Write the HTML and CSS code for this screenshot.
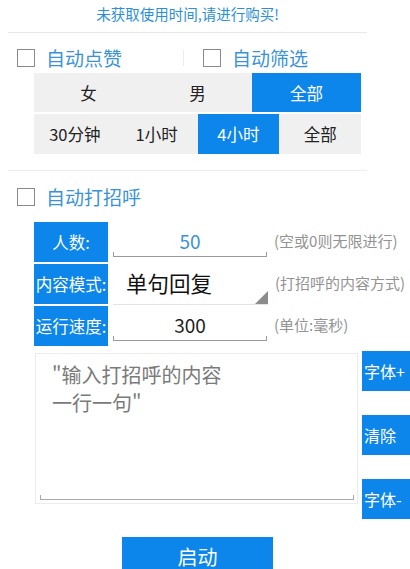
FILE: index.html
```html
<!DOCTYPE html>
<html lang="zh">
<head>
<meta charset="utf-8">
<link rel="stylesheet" href="styles.css">
</head>
<body>
<div class="page">
  <div class="notice">未获取使用时间,请进行购买!</div>
  <div class="checks">
    <label class="check"><span class="box"></span><span class="check-text">自动点赞</span></label>
    <span class="vsep"></span>
    <label class="check"><span class="box"></span><span class="check-text">自动筛选</span></label>
  </div>
  <div class="seg seg3">
    <div class="opt">女</div>
    <div class="opt">男</div>
    <div class="opt on">全部</div>
  </div>
  <div class="seg seg4">
    <div class="opt">30分钟</div>
    <div class="opt">1小时</div>
    <div class="opt on">4小时</div>
    <div class="opt">全部</div>
  </div>
  <div class="divider"></div>
  <div class="checks single">
    <label class="check"><span class="box"></span><span class="check-text">自动打招呼</span></label>
  </div>
  <div class="form">
    <div class="frow">
      <div class="flabel">人数:</div>
      <div class="field"><span class="val blue">50</span><span class="uline"></span></div>
      <div class="hint">(空或0则无限进行)</div>
    </div>
    <div class="frow">
      <div class="flabel">内容模式:</div>
      <div class="spinner"><span class="spin-val">单句回复</span><span class="tri"></span></div>
      <div class="hint">(打招呼的内容方式)</div>
    </div>
    <div class="frow">
      <div class="flabel">运行速度:</div>
      <div class="field"><span class="val">300</span><span class="uline"></span></div>
      <div class="hint">(单位:毫秒)</div>
    </div>
  </div>
  <div class="editor">
    <div class="textarea">
      <div class="placeholder">
        <div class="pline">"输入打招呼的内容</div>
        <div class="pline">一行一句"</div>
      </div>
      <span class="tline"></span>
    </div>
    <div class="side">
      <div class="sbtn">字体+</div>
      <div class="sbtn">清除</div>
      <div class="sbtn">字体-</div>
    </div>
  </div>
  <div class="start-wrap"><div class="start">启动</div></div>
</div>
</body>
</html>
```
FILE: styles.css
```css
html, body {
  margin: 0;
  padding: 0;
  background: #ffffff;
}
body {
  font-family: "Noto Sans CJK SC", "Noto Sans", "Liberation Sans", sans-serif;
  width: 410px;
  height: 569px;
  overflow: hidden;
}
.page {
  display: flex;
  flex-direction: column;
}
.notice {
  margin-left: 8px;
  width: 359px;
  height: 32px;
  border-bottom: 1px solid #e8e8e8;
  text-align: center;
  font-size: 14.5px;
  line-height: 28px;
  color: #2b8fd6;
  white-space: nowrap;
}
.checks {
  display: flex;
  align-items: center;
  height: 40px;
  padding-left: 17px;
  padding-top: 9px;
  box-sizing: border-box;
}
.check {
  display: flex;
  align-items: center;
  gap: 11px;
}
.box {
  width: 16px;
  height: 16px;
  border: 1.5px solid #8a8a8a;
  background: #fff;
}
.check-text {
  font-size: 19px;
  color: #3a93d6;
  line-height: 24px;
}
.vsep {
  width: 1px;
  height: 16px;
  background: #ececec;
  margin: 0 19px 0 61px;
}
.seg {
  margin-left: 34px;
  width: 327px;
  height: 39px;
  display: grid;
  background: #f0f0f0;
}
.seg3 { grid-template-columns: 1fr 1fr 1fr; }
.seg4 {
  grid-template-columns: 1fr 1fr 1fr 1fr;
  margin-top: 2px;
  height: 40px;
}
.opt {
  display: flex;
  align-items: center;
  justify-content: center;
  font-size: 16.5px;
  color: #222;
}
.opt.on {
  background: #0c86ea;
  color: #fff;
}
.divider {
  margin: 16px 0 0 8px;
  width: 359px;
  height: 1px;
  background: #ececec;
}
.checks.single {
  height: 51px;
  padding-top: 0;
}
.form {
  display: flex;
  flex-direction: column;
  gap: 2px;
}
.frow {
  display: flex;
  align-items: stretch;
  height: 40px;
  padding-left: 34px;
}
.flabel {
  width: 74px;
  background: #0c86ea;
  color: #fff;
  font-size: 16.5px;
  display: flex;
  align-items: center;
  justify-content: center;
  white-space: nowrap;
  overflow: hidden;
}
.field {
  position: relative;
  width: 154px;
  margin-left: 5px;
  display: flex;
  align-items: center;
  justify-content: center;
}
.val {
  font-size: 19px;
  color: #222;
  margin-bottom: 4px;
}
.val.blue { color: #3a93d6; }
.uline {
  position: absolute;
  left: 0;
  right: 0;
  bottom: 5px;
  height: 4px;
  border: 1px solid #9a9a9a;
  border-top: none;
}
.spinner {
  position: relative;
  width: 155px;
  margin-left: 5px;
  display: flex;
  align-items: center;
  border-bottom: 1px solid #e4e4e4;
  margin-bottom: -1px;
}
.spin-val {
  font-size: 21.5px;
  color: #111;
  margin-left: 13px;
  margin-top: -3px;
}
.tri {
  position: absolute;
  right: 0;
  bottom: 0;
  width: 0;
  height: 0;
  border-left: 13px solid transparent;
  border-bottom: 13px solid #8c8c8c;
}
.hint {
  margin-left: 7px;
  font-size: 15px;
  color: #939393;
  display: flex;
  align-items: center;
  white-space: nowrap;
  margin-top: -3px;
}
.editor {
  display: flex;
  margin-top: 5px;
  padding-left: 35px;
}
.textarea {
  position: relative;
  width: 321px;
  height: 149px;
  margin-top: 2px;
  border: 1px solid #ececec;
}
.placeholder {
  padding: 7px 0 0 16px;
  display: flex;
  flex-direction: column;
}
.pline {
  height: 28px;
  font-size: 20px;
  line-height: 28px;
  color: #7a7a7a;
  white-space: nowrap;
}
.tline {
  position: absolute;
  left: 4px;
  right: 3px;
  bottom: 3px;
  height: 4px;
  border: 1px solid #a8a8a8;
  border-top: none;
}
.side {
  margin-left: 4px;
  display: flex;
  flex-direction: column;
  gap: 24px;
}
.sbtn {
  width: 48px;
  height: 40px;
  background: #0c86ea;
  color: #fff;
  font-size: 16px;
  display: flex;
  align-items: center;
  justify-content: flex-start;
  padding-left: 2px;
  box-sizing: border-box;
  white-space: nowrap;
  overflow: hidden;
}
.start-wrap {
  display: flex;
  padding-left: 122px;
  margin-top: 18px;
}
.start {
  width: 151px;
  height: 44px;
  background: #0c86ea;
  color: #fff;
  font-size: 20px;
  display: flex;
  justify-content: center;
  padding-top: 5px;
  box-sizing: border-box;
}
```
